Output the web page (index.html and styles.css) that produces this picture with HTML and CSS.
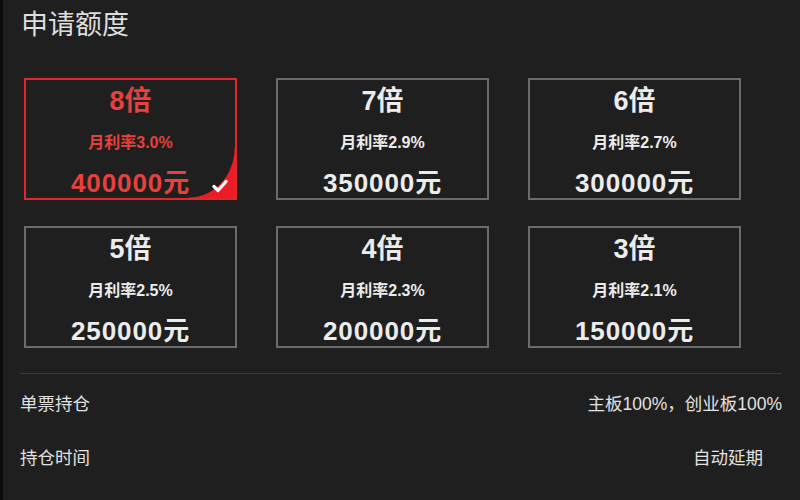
FILE: index.html
```html
<!DOCTYPE html>
<html lang="zh-CN">
<head>
<meta charset="utf-8">
<link rel="stylesheet" href="styles.css">
</head>
<body>
<div class="page">
  <h1 class="title">申请额度</h1>
  <div class="grid">
    <div class="card active">
      <div class="mult">8倍</div>
      <div class="rate">月利率3.0%</div>
      <div class="amount">400000元</div>
      <div class="corner">
        <svg class="check" viewBox="0 0 16 14" width="16" height="14"><polyline points="2,7.5 6,11.5 14,2.5" fill="none" stroke="#fff" stroke-width="3.2" stroke-linecap="round" stroke-linejoin="round"/></svg>
      </div>
    </div>
    <div class="card">
      <div class="mult">7倍</div>
      <div class="rate">月利率2.9%</div>
      <div class="amount">350000元</div>
    </div>
    <div class="card">
      <div class="mult">6倍</div>
      <div class="rate">月利率2.7%</div>
      <div class="amount">300000元</div>
    </div>
    <div class="card">
      <div class="mult">5倍</div>
      <div class="rate">月利率2.5%</div>
      <div class="amount">250000元</div>
    </div>
    <div class="card">
      <div class="mult">4倍</div>
      <div class="rate">月利率2.3%</div>
      <div class="amount">200000元</div>
    </div>
    <div class="card">
      <div class="mult">3倍</div>
      <div class="rate">月利率2.1%</div>
      <div class="amount">150000元</div>
    </div>
  </div>
  <div class="divider"></div>
  <div class="rows">
    <div class="row"><span class="label">单票持仓</span><span class="value">主板100%，创业板100%</span></div>
    <div class="row"><span class="label">持仓时间</span><span class="value pad">自动延期</span></div>
    <div class="row"><span class="label">管理费用</span><span class="value">按月收取</span></div>
  </div>
</div>
</body>
</html>
```

FILE: styles.css
```css
html, body {
  margin: 0;
  padding: 0;
  background: #1f1f1f;
  overflow: hidden;
}
.page {
  width: 800px;
  height: 500px;
  box-sizing: border-box;
  border-left: 3px solid #0c0c0c;
  font-family: "Liberation Sans", "Noto Sans CJK SC", sans-serif;
  color: #e6e6e6;
  overflow: hidden;
}
.title {
  margin: 0;
  padding: 8px 0 0 18px;
  height: 70px;
  box-sizing: border-box;
  font-size: 27px;
  line-height: 30px;
  font-weight: normal;
  color: #dedede;
  font-family: "Noto Sans CJK SC", sans-serif;
}
.grid {
  display: grid;
  grid-template-columns: repeat(3, 213px);
  grid-auto-rows: 122px;
  column-gap: 39px;
  row-gap: 26px;
  padding: 8px 0 0 21px;
}
.card {
  position: relative;
  box-sizing: border-box;
  border: 2px solid #6b6b6b;
  display: flex;
  flex-direction: column;
  align-items: center;
  padding-top: 6px;
  color: #ececec;
  font-weight: bold;
  overflow: hidden;
}
.card.active {
  border-color: #e3262b;
  color: #e8403c;
}
.mult {
  font-size: 27px;
  line-height: 30px;
}
.rate {
  font-size: 16px;
  line-height: 20px;
  margin-top: 17px;
}
.amount {
  font-size: 26px;
  line-height: 30px;
  margin-top: 15px;
  letter-spacing: 0.9px;
}
.corner {
  position: absolute;
  right: 0;
  bottom: 0;
  width: 46px;
  height: 50px;
  background: radial-gradient(ellipse 100% 100% at 0 0, transparent 98%, #ec1c24 100%);
}
.check {
  position: absolute;
  right: 7px;
  bottom: 5px;
}
.divider {
  height: 1px;
  background: #3a3a3a;
  margin: 25px 18px 0 17px;
}
.rows {
  padding: 1px 18px 0 17px;
  font-family: "Liberation Sans", "Noto Sans CJK SC", sans-serif;
}
.row {
  display: flex;
  justify-content: space-between;
  align-items: center;
  height: 54px;
  font-size: 17.5px;
  color: #e2e2e2;
}
.value.pad {
  padding-right: 19px;
}
```
